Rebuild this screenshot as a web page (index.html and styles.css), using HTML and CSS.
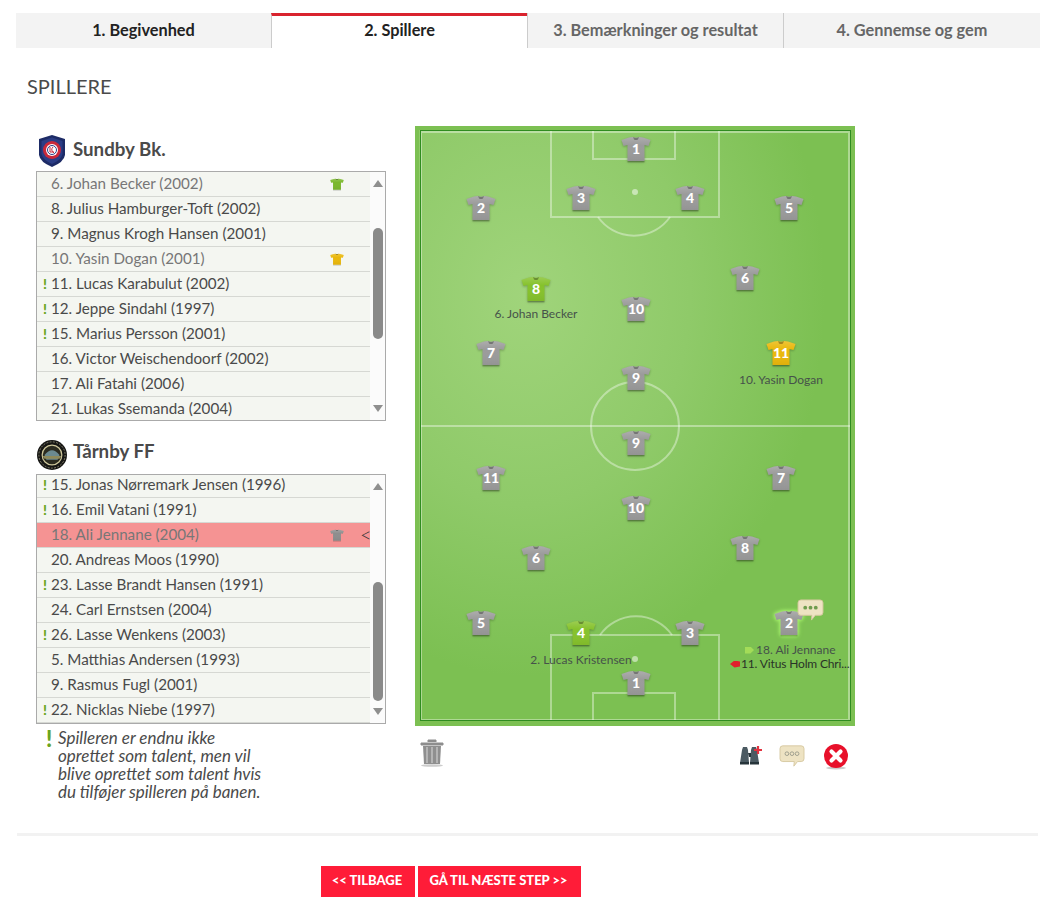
FILE: index.html
```html
<!DOCTYPE html>
<html lang="da">
<head>
<meta charset="utf-8">
<title>Spillere</title>
<link rel="stylesheet" href="styles.css">
</head>
<body>
<svg class="defs" width="0" height="0" aria-hidden="true">
  <defs>
    <linearGradient id="shirt-shade" x1="0" y1="0" x2="0" y2="1">
      <stop offset="0" stop-color="#fff" stop-opacity=".18"/>
      <stop offset=".35" stop-color="#fff" stop-opacity="0"/>
      <stop offset="1" stop-color="#000" stop-opacity=".05"/>
    </linearGradient>
    <symbol id="shirt" viewBox="0 0 30 27">
      <path d="M8 1.500 L12 1 Q15 2.500 18 1 L22 1.500 L29.500 4 L27.500 10 L23.500 9 L23.500 25 L6.500 25 L6.500 9 L2.500 10 L0.500 4 Z" fill="currentColor"/>
      <path d="M8 1.500 L12 1 Q15 2.500 18 1 L22 1.500 L29.500 4 L27.500 10 L23.500 9 L23.500 25 L6.500 25 L6.500 9 L2.500 10 L0.500 4 Z" fill="url(#shirt-shade)"/>
      <path d="M12 1 Q15 2.800 18 1 L17 3.400 Q15 4.400 13 3.400 Z" fill="#000" opacity=".3"/>
      <path d="M6.500 25 H23.500 V26.400 H6.500 Z" fill="#000" opacity=".22"/>
    </symbol>
  </defs>
</svg>

<nav class="tabs">
  <a class="tab tab-done">1. Begivenhed</a>
  <a class="tab tab-active">2. Spillere</a>
  <a class="tab">3. Bemærkninger og resultat</a>
  <a class="tab">4. Gennemse og gem</a>
</nav>

<h1 class="title">SPILLERE</h1>

<main class="content">
  <section class="teams">
    <div class="team">
      <h2 class="team-name">
        <svg class="logo" viewBox="0 0 28 32">
          <path d="M14 0 L27 4 V20 Q26 27 14 32 Q2 27 1 20 V4 Z" fill="#1d2b66"/>
          <path d="M14 2.500 L24.500 6 V19 Q23 25 14 29 Q5 25 3.500 19 V6 Z" fill="#2b3d85"/>
          <circle cx="14" cy="15" r="9" fill="#c9283a"/>
          <circle cx="14" cy="15" r="6" fill="#fff"/>
          <circle cx="14" cy="15" r="4.500" fill="none" stroke="#2b3d85" stroke-width="1"/>
          <path d="M12 12 V17 H16 M15 12 Q12 15 16 18" fill="none" stroke="#c9283a" stroke-width="1"/>
        </svg>
        Sundby Bk.
      </h2>
      <div class="listbox">
        <ul class="rows">
          <li class="row row-used"><span class="mark"></span><span class="pname">6. Johan Becker (2002)</span><svg class="mini mini-green"><use href="#shirt"/></svg></li>
          <li class="row"><span class="mark"></span><span class="pname">8. Julius Hamburger-Toft (2002)</span></li>
          <li class="row"><span class="mark"></span><span class="pname">9. Magnus Krogh Hansen (2001)</span></li>
          <li class="row row-used"><span class="mark"></span><span class="pname">10. Yasin Dogan (2001)</span><svg class="mini mini-yellow"><use href="#shirt"/></svg></li>
          <li class="row"><span class="mark">!</span><span class="pname">11. Lucas Karabulut (2002)</span></li>
          <li class="row"><span class="mark">!</span><span class="pname">12. Jeppe Sindahl (1997)</span></li>
          <li class="row"><span class="mark">!</span><span class="pname">15. Marius Persson (2001)</span></li>
          <li class="row"><span class="mark"></span><span class="pname">16. Victor Weischendoorf (2002)</span></li>
          <li class="row"><span class="mark"></span><span class="pname">17. Ali Fatahi (2006)</span></li>
          <li class="row"><span class="mark"></span><span class="pname">21. Lukas Ssemanda (2004)</span></li>
        </ul>
        <div class="scrollbar">
          <i class="arrow arrow-up"></i>
          <i class="thumb thumb-a"></i>
          <i class="arrow arrow-down"></i>
        </div>
      </div>
    </div>

    <div class="team team-second">
      <h2 class="team-name">
        <svg class="logo logo-round" viewBox="0 0 32 32">
          <circle cx="16" cy="16" r="16" fill="#161614"/>
          <circle cx="16" cy="16" r="14" fill="none" stroke="#8a8670" stroke-width="1" stroke-dasharray="2 1.500"/>
          <circle cx="16" cy="16" r="10.500" fill="#2b2b20" stroke="#cfc89c" stroke-width="1.300"/>
          <path d="M8 16 Q16 6 24 16 L22 21 H10 Z" fill="#6b8a90"/>
          <path d="M6 17 H26 L24 20 H8 Z" fill="#8f8a5a"/>
        </svg>
        Tårnby FF
      </h2>
      <div class="listbox">
        <ul class="rows rows-scrolled">
          <li class="row"><span class="mark">!</span><span class="pname">15. Jonas Nørremark Jensen (1996)</span></li>
          <li class="row"><span class="mark">!</span><span class="pname">16. Emil Vatani (1991)</span></li>
          <li class="row row-used row-selected"><span class="mark"></span><span class="pname">18. Ali Jennane (2004)</span><svg class="mini mini-grey"><use href="#shirt"/></svg><span class="caret">&lt;</span></li>
          <li class="row"><span class="mark"></span><span class="pname">20. Andreas Moos (1990)</span></li>
          <li class="row"><span class="mark">!</span><span class="pname">23. Lasse Brandt Hansen (1991)</span></li>
          <li class="row"><span class="mark"></span><span class="pname">24. Carl Ernstsen (2004)</span></li>
          <li class="row"><span class="mark">!</span><span class="pname">26. Lasse Wenkens (2003)</span></li>
          <li class="row"><span class="mark"></span><span class="pname">5. Matthias Andersen (1993)</span></li>
          <li class="row"><span class="mark"></span><span class="pname">9. Rasmus Fugl (2001)</span></li>
          <li class="row"><span class="mark">!</span><span class="pname">22. Nicklas Niebe (1997)</span></li>
        </ul>
        <div class="scrollbar">
          <i class="arrow arrow-up"></i>
          <i class="thumb thumb-b"></i>
          <i class="arrow arrow-down"></i>
        </div>
      </div>
      <div class="note">
        <span class="note-mark">!</span>
        <p class="note-text">Spilleren er endnu ikke<br>oprettet som talent, men vil<br>blive oprettet som talent hvis<br>du tilføjer spilleren på banen.</p>
      </div>
    </div>
  </section>

  <section class="pitch-col">
    <div class="pitch">
      <svg class="lines" viewBox="0 0 440 600" width="440" height="600">
        <g fill="none" stroke="#fff" stroke-opacity=".38" stroke-width="2">
          <rect x="6" y="6" width="428" height="588"/>
          <path d="M136 5 V91 H304 V5"/>
          <path d="M178 5 V33 H260 V5"/>
          <path d="M183 91 A44 44 0 0 0 255 91"/>
          <path d="M5 300 H435"/>
          <circle cx="220" cy="300" r="44"/>
          <path d="M136 595 V509 H304 V595"/>
          <path d="M178 595 V567 H260 V595"/>
          <path d="M185 509 A44 44 0 0 1 257 509"/>
        </g>
        <circle cx="220" cy="66" r="3" fill="#fff" fill-opacity=".5"/>
        <circle cx="220" cy="533" r="3" fill="#fff" fill-opacity=".5"/>
      </svg>

      <div class="player p-t1"><svg class="shirt"><use href="#shirt"/></svg><b class="num">1</b></div>
      <div class="player p-t2"><svg class="shirt"><use href="#shirt"/></svg><b class="num">2</b></div>
      <div class="player p-t3"><svg class="shirt"><use href="#shirt"/></svg><b class="num">3</b></div>
      <div class="player p-t4"><svg class="shirt"><use href="#shirt"/></svg><b class="num">4</b></div>
      <div class="player p-t5"><svg class="shirt"><use href="#shirt"/></svg><b class="num">5</b></div>
      <div class="player p-t6"><svg class="shirt"><use href="#shirt"/></svg><b class="num">6</b></div>
      <div class="player p-t7"><svg class="shirt"><use href="#shirt"/></svg><b class="num">7</b></div>
      <div class="player player-green p-t8"><svg class="shirt"><use href="#shirt"/></svg><b class="num">8</b><span class="plabel">6. Johan Becker</span></div>
      <div class="player p-t9"><svg class="shirt"><use href="#shirt"/></svg><b class="num">9</b></div>
      <div class="player p-t10"><svg class="shirt"><use href="#shirt"/></svg><b class="num">10</b></div>
      <div class="player player-yellow p-t11"><svg class="shirt"><use href="#shirt"/></svg><b class="num">11</b><span class="plabel">10. Yasin Dogan</span></div>

      <div class="player p-b1"><svg class="shirt"><use href="#shirt"/></svg><b class="num">1</b></div>
      <div class="player player-sub p-b2"><svg class="shirt"><use href="#shirt"/></svg><b class="num">2</b>
        <svg class="bubble" viewBox="0 0 28 24"><path d="M4 1 H24 Q27 1 27 4 V14 Q27 17 24 17 H19 L15 22 L15.500 17 H4 Q1 17 1 14 V4 Q1 1 4 1 Z" fill="#eee3c3" stroke="#d6c8a0"/><circle cx="8.500" cy="9" r="2" fill="#6f9c4e"/><circle cx="14" cy="9" r="2" fill="#6f9c4e"/><circle cx="19.500" cy="9" r="2" fill="#6f9c4e"/></svg>
        <span class="subs">
          <span class="sub-in"><i class="sub-arrow arrow-in"></i>18. Ali Jennane</span>
          <span class="sub-out"><i class="sub-arrow arrow-out"></i>11. Vitus Holm Chri...</span>
        </span>
      </div>
      <div class="player p-b3"><svg class="shirt"><use href="#shirt"/></svg><b class="num">3</b></div>
      <div class="player player-green p-b4"><svg class="shirt"><use href="#shirt"/></svg><b class="num">4</b><span class="plabel">2. Lucas Kristensen</span></div>
      <div class="player p-b5"><svg class="shirt"><use href="#shirt"/></svg><b class="num">5</b></div>
      <div class="player p-b6"><svg class="shirt"><use href="#shirt"/></svg><b class="num">6</b></div>
      <div class="player p-b7"><svg class="shirt"><use href="#shirt"/></svg><b class="num">7</b></div>
      <div class="player p-b8"><svg class="shirt"><use href="#shirt"/></svg><b class="num">8</b></div>
      <div class="player p-b9"><svg class="shirt"><use href="#shirt"/></svg><b class="num">9</b></div>
      <div class="player p-b10"><svg class="shirt"><use href="#shirt"/></svg><b class="num">10</b></div>
      <div class="player p-b11"><svg class="shirt"><use href="#shirt"/></svg><b class="num">11</b></div>
    </div>

    <div class="tools">
      <svg class="trash" viewBox="0 0 24 28">
        <path d="M8 3 V1 H16 V3 M1 4 H23 V6 H1 Z" fill="#8e8e8e" stroke="#8e8e8e"/>
        <path d="M3 7 H21 L20 25 H4 Z" fill="#8f8f8f"/>
        <path d="M7 8 V24 M12 8 V24 M17 8 V24" stroke="#bdbdbd" stroke-width="1.600"/>
        <ellipse cx="12" cy="26.500" rx="11" ry="1.300" fill="#ccc"/>
      </svg>
      <div class="tool-group">
        <svg class="tool tool-bino" viewBox="0 0 24 22">
          <path d="M3 6 L4 3 H8 L9 6 L10 19 H1 Z" fill="#4b5a62"/>
          <path d="M12 6 L13 3 H17 L18 6 L20 19 H11 Z" fill="#4b5a62"/>
          <path d="M9 9 H12 V13 H10 Z" fill="#27343a"/>
          <path d="M1 18 H10 V20.500 H1 Z M11 18 H20 V20.500 H11 Z" fill="#27343a"/>
          <path d="M19 2 V10 M15 6 H23" stroke="#e2323f" stroke-width="2.200"/>
        </svg>
        <svg class="tool tool-chat" viewBox="0 0 28 26">
          <path d="M4 2 H24 Q27 2 27 5 V16 Q27 19 24 19 H20 L16 24 L16.500 19 H4 Q1 19 1 16 V5 Q1 2 4 2 Z" fill="#eee3c3" stroke="#d6c8a0"/>
          <circle cx="8.500" cy="10.500" r="2" fill="none" stroke="#9c9c8c"/>
          <circle cx="14" cy="10.500" r="2" fill="none" stroke="#9c9c8c"/>
          <circle cx="19.500" cy="10.500" r="2" fill="none" stroke="#9c9c8c"/>
        </svg>
        <svg class="tool tool-close" viewBox="0 0 26 26">
          <ellipse cx="13" cy="24" rx="10" ry="1.500" fill="#ccc"/>
          <circle cx="13" cy="12" r="12" fill="#e8102a"/>
          <path d="M8.500 7.500 L17.500 16.500 M17.500 7.500 L8.500 16.500" stroke="#fff" stroke-width="4.200" stroke-linecap="round"/>
        </svg>
      </div>
    </div>
  </section>
</main>

<hr class="rule">

<footer class="actions">
  <a class="btn btn-back">&lt;&lt; TILBAGE</a>
  <a class="btn btn-next">GÅ TIL NÆSTE STEP &gt;&gt;</a>
</footer>
</body>
</html>
```

FILE: styles.css
```css
* { box-sizing: border-box; }
html, body { margin: 0; padding: 0; }
body {
  background: #fff;
  color: #4a4a4a;
  font-family: "Lato", "Liberation Sans", sans-serif;
  width: 1052px;
  height: 906px;
  overflow: hidden;
}
.defs { position: absolute; }

/* Tabs */
.tabs {
  display: grid;
  grid-template-columns: 255px 256px 256px 257px;
  margin: 13px 12px 0 16px;
  height: 35px;
  background: #f3f3f3;
}
.tab {
  display: flex;
  align-items: center;
  justify-content: center;
  padding-bottom: 2px;
  font-size: 16.300px;
  font-weight: 700;
  color: #666;
  border-left: 1px solid #ccc;
}
.tab-done { color: #222; border-left: 0; }
.tab-active {
  color: #222;
  background: #fff;
  border-top: 3px solid #d9232e;
  padding-bottom: 5px;
}

.title {
  margin: 26px 0 0 27px;
  font-size: 20px;
  line-height: 24px;
  font-weight: 400;
  color: #4a4a4a;
}

/* Main */
.content {
  display: flex;
  margin: 28px 0 0 36px;
}
.teams { width: 350px; }
.team-name {
  display: flex;
  align-items: center;
  gap: 7px;
  height: 45px;
  margin: 0 0 0 2px;
  padding-top: 1px;
  font-size: 18.700px;
  font-weight: 700;
  color: #4a4a4a;
}
.logo { width: 28px; height: 32px; flex: none; margin-top: 4px; }
.logo-round { width: 30px; height: 32px; margin: 8px -1px 0 -1px; }
.team-second { margin-top: 18px; }
.team-second .team-name { height: 35px; padding: 0 0 11px; }

.listbox {
  display: flex;
  height: 250px;
  border: 1px solid #aaa;
  background: #fff;
  overflow: hidden;
}
.rows {
  list-style: none;
  margin: 0;
  padding: 0;
  width: 333px;
  flex: none;
}
.rows-scrolled { margin-top: -2px; }
.row {
  position: relative;
  display: flex;
  align-items: center;
  height: 25px;
  padding: 0 0 2px 6px;
  background: #f4f6f1;
  border-bottom: 1px solid #d6d8d3;
  font-size: 15.200px;
  color: #4a4a4a;
  white-space: nowrap;
}
.row-used { color: #777; }
.row-selected { background: #f59393; }
.mark {
  width: 7px;
  flex: none;
  margin-right: 1px;
  color: #6aa51f;
  font-weight: 900;
  font-size: 14px;
}
.mini {
  position: absolute;
  left: 293px;
  top: 6px;
  width: 14px;
  height: 13px;
}
.mini-green { color: #7ab82c; }
.mini-yellow { color: #eab80c; }
.mini-grey { color: #8e8e8e; }
.caret {
  position: absolute;
  left: 323px;
  color: #333;
  font-size: 20px;
  line-height: 24px;
  font-weight: 300;
}
.scrollbar {
  position: relative;
  flex: 1;
  background: #fbfbfb;
}
.arrow {
  position: absolute;
  left: 3px;
  width: 0;
  height: 0;
  border-left: 5px solid transparent;
  border-right: 5px solid transparent;
}
.arrow-up { top: 8px; border-bottom: 7px solid #8f8f8f; }
.arrow-down { bottom: 8px; border-top: 7px solid #8f8f8f; }
.thumb {
  position: absolute;
  left: 3px;
  width: 10px;
  background: #8a8a8a;
  border-radius: 5px;
}
.thumb-a { top: 56px; height: 111px; }
.thumb-b { top: 107px; height: 119px; }

.note {
  display: flex;
  margin: 5px 0 0 10px;
}
.note-mark {
  width: 12px;
  flex: none;
  color: #6aa51f;
  font-size: 22px;
  font-weight: 900;
  line-height: 20px;
}
.note-text {
  margin: 0;
  font-size: 17px;
  font-style: italic;
  line-height: 18px;
  color: #4a4a4a;
}

/* Pitch */
.pitch-col {
  width: 440px;
  margin: 0 0 0 29px;
}
.pitch {
  position: relative;
  width: 440px;
  height: 600px;
  background: radial-gradient(ellipse 300px 380px at 110px 170px, #a0d47b 0%, #8fca69 55%, #7cc052 100%);
  box-shadow: inset 0 0 0 4px #7cc052;
  overflow: hidden;
}
.pitch::after {
  content: "";
  position: absolute;
  inset: 4px 4px 5px 5px;
  border: 1px solid #2f8c1f;
  pointer-events: none;
}
.lines { position: absolute; left: 0; top: 0; }

.player {
  position: absolute;
  width: 30px;
  height: 27px;
  margin: -13px 0 0 -15px;
}
.shirt {
  display: block;
  width: 30px;
  height: 27px;
  color: #9b9b9b;
  filter: drop-shadow(0 1px 1px rgba(0,0,0,.25));
}
.num {
  position: absolute;
  left: 0;
  right: 0;
  top: 4px;
  text-align: center;
  font-size: 14px;
  line-height: 18px;
  font-weight: 900;
  color: #fff;
}
.player-green .shirt { color: #86c22c; }
.player-yellow .shirt { color: #eab80c; }
.plabel, .subs {
  position: absolute;
  left: 50%;
  transform: translateX(-50%);
  top: 33px;
  font-size: 12px;
  line-height: 14px;
  color: #46524a;
  white-space: nowrap;
}
.p-t8 .plabel { top: 31px; }
.player-sub .shirt { filter: drop-shadow(0 0 2px #a5f06a) drop-shadow(0 0 1px #a5f06a); }
.bubble {
  position: absolute;
  left: 23px;
  top: -11px;
  width: 27px;
  height: 23px;
}
.subs {
  top: 33px;
  left: 0;
  width: 125px;
  transform: none;
  margin-left: -44px;
  display: flex;
  flex-direction: column;
}
.sub-in, .sub-out { display: flex; align-items: center; }
.sub-in { padding-left: 15px; }
.sub-out { color: #2a3328; letter-spacing: -.15px; }
.sub-arrow { flex: none; display: block; height: 7px; }
.arrow-in {
  width: 9px;
  margin-right: 2px;
  background: #a3dc58;
  clip-path: polygon(0 0, 60% 0, 100% 50%, 60% 100%, 0 100%);
}
.arrow-out {
  width: 10px;
  margin-right: 1px;
  background: #e0212c;
  clip-path: polygon(0 50%, 45% 0, 100% 15%, 100% 85%, 45% 100%);
}

.p-t1 { left: 221px; top: 23px; }
.p-t2 { left: 66px; top: 82px; }
.p-t3 { left: 166px; top: 72px; }
.p-t4 { left: 275px; top: 72px; }
.p-t5 { left: 374px; top: 82px; }
.p-t6 { left: 330px; top: 152px; }
.p-t7 { left: 76px; top: 227px; }
.p-t8 { left: 121px; top: 163px; }
.p-t9 { left: 221px; top: 252px; }
.p-t10 { left: 221px; top: 183px; }
.p-t11 { left: 366px; top: 227px; }
.p-b1 { left: 221px; top: 557px; }
.p-b2 { left: 374px; top: 497px; }
.p-b3 { left: 275px; top: 507px; }
.p-b4 { left: 166px; top: 507px; }
.p-b5 { left: 66px; top: 497px; }
.p-b6 { left: 121px; top: 432px; }
.p-b7 { left: 366px; top: 352px; }
.p-b8 { left: 330px; top: 422px; }
.p-b9 { left: 221px; top: 317px; }
.p-b10 { left: 221px; top: 382px; }
.p-b11 { left: 76px; top: 352px; }

.tools {
  display: flex;
  justify-content: space-between;
  margin-top: 13px;
  padding: 0 6px 0 5px;
}
.trash { width: 24px; height: 28px; }
.tool-group { display: flex; align-items: flex-start; gap: 18px; padding-top: 5px; }
.tool-bino { width: 24px; height: 22px; margin-right: -2px; }
.tool-chat { width: 26px; height: 24px; }
.tool-close { width: 26px; height: 26px; }

.rule {
  margin: 0 14px 0 17px;
  border: 0;
  height: 3px;
  background: #f2f2f2;
  position: absolute;
  left: 0;
  top: 833px;
  width: 1021px;
}
.actions {
  position: absolute;
  top: 866px;
  left: 321px;
  display: flex;
  gap: 3px;
}
.btn {
  display: flex;
  align-items: center;
  justify-content: center;
  height: 31px;
  padding: 0 2px 3px 0;
  background: #ff1c38;
  color: #fff;
  font-size: 13px;
  font-weight: 900;
}
.btn-back { width: 94px; }
.btn-next { width: 163px; }
```
